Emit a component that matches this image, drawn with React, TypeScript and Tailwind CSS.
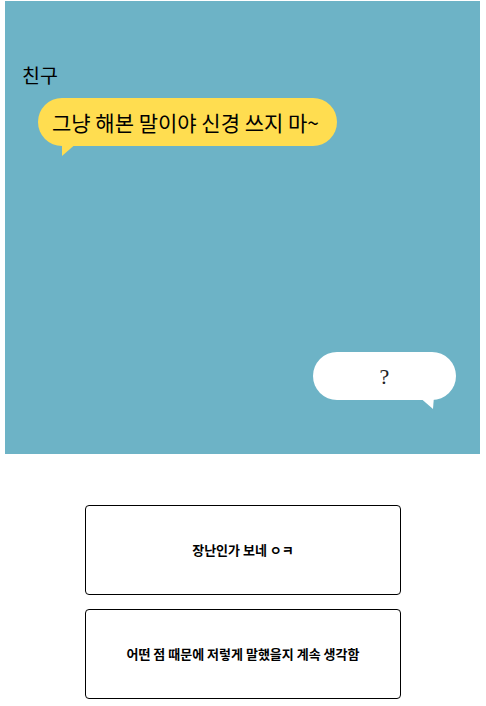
import React from 'react';

const kr = "font-['Noto_Sans_CJK_KR','Noto_Sans',sans-serif]";

function YellowTail() {
  return (
    <svg className="absolute left-[24px] top-[44px]" width="16" height="14" viewBox="0 0 16 14">
      <path d="M0 0 L16 0 L0 14 Z" fill="#ffdd50" />
    </svg>
  );
}

function WhiteTail() {
  return (
    <svg className="absolute left-[105px] top-[44px]" width="16" height="14" viewBox="0 0 16 14">
      <path d="M0 0 L16 0 L15 13 Z" fill="#ffffff" />
    </svg>
  );
}

export default function App() {
  const choices = ['장난인가 보네 ㅇㅋ', '어떤 점 때문에 저렇게 말했을지 계속 생각함'];

  return (
    <div className={`min-h-[706px] bg-white ${kr}`}>
      {/* chat scene */}
      <div className="ml-[5px] mt-[1px] w-[475px] h-[453px] bg-[#6db3c6] pt-[61px] pl-[17px] flex flex-col">
        <div className="text-[19.5px] leading-[26px] text-black">친구</div>
        <div className="relative self-start ml-[16px] mt-[10px] w-[299px] h-[48px] rounded-full bg-[#ffdd50] pl-[14px] text-[21px] leading-[48px] text-black whitespace-nowrap">
          그냥 해본 말이야 신경 쓰지 마~
          <YellowTail />
        </div>
        <div className="relative self-end mr-[24px] mt-[206px] w-[143px] h-[48px] rounded-full bg-white flex items-center justify-center">
          <span className="font-['Liberation_Serif',serif] text-[22px] text-[#222]">?</span>
          <WhiteTail />
        </div>
      </div>

      {/* answer choices */}
      <div className="mt-[51px] pl-[85px] flex flex-col items-start gap-[14px]">
        {choices.map(c => (
          <button key={c} className="w-[316px] h-[90px] border border-black rounded bg-white text-[13px] font-semibold text-black">
            {c}
          </button>
        ))}
      </div>
    </div>
  );
}
